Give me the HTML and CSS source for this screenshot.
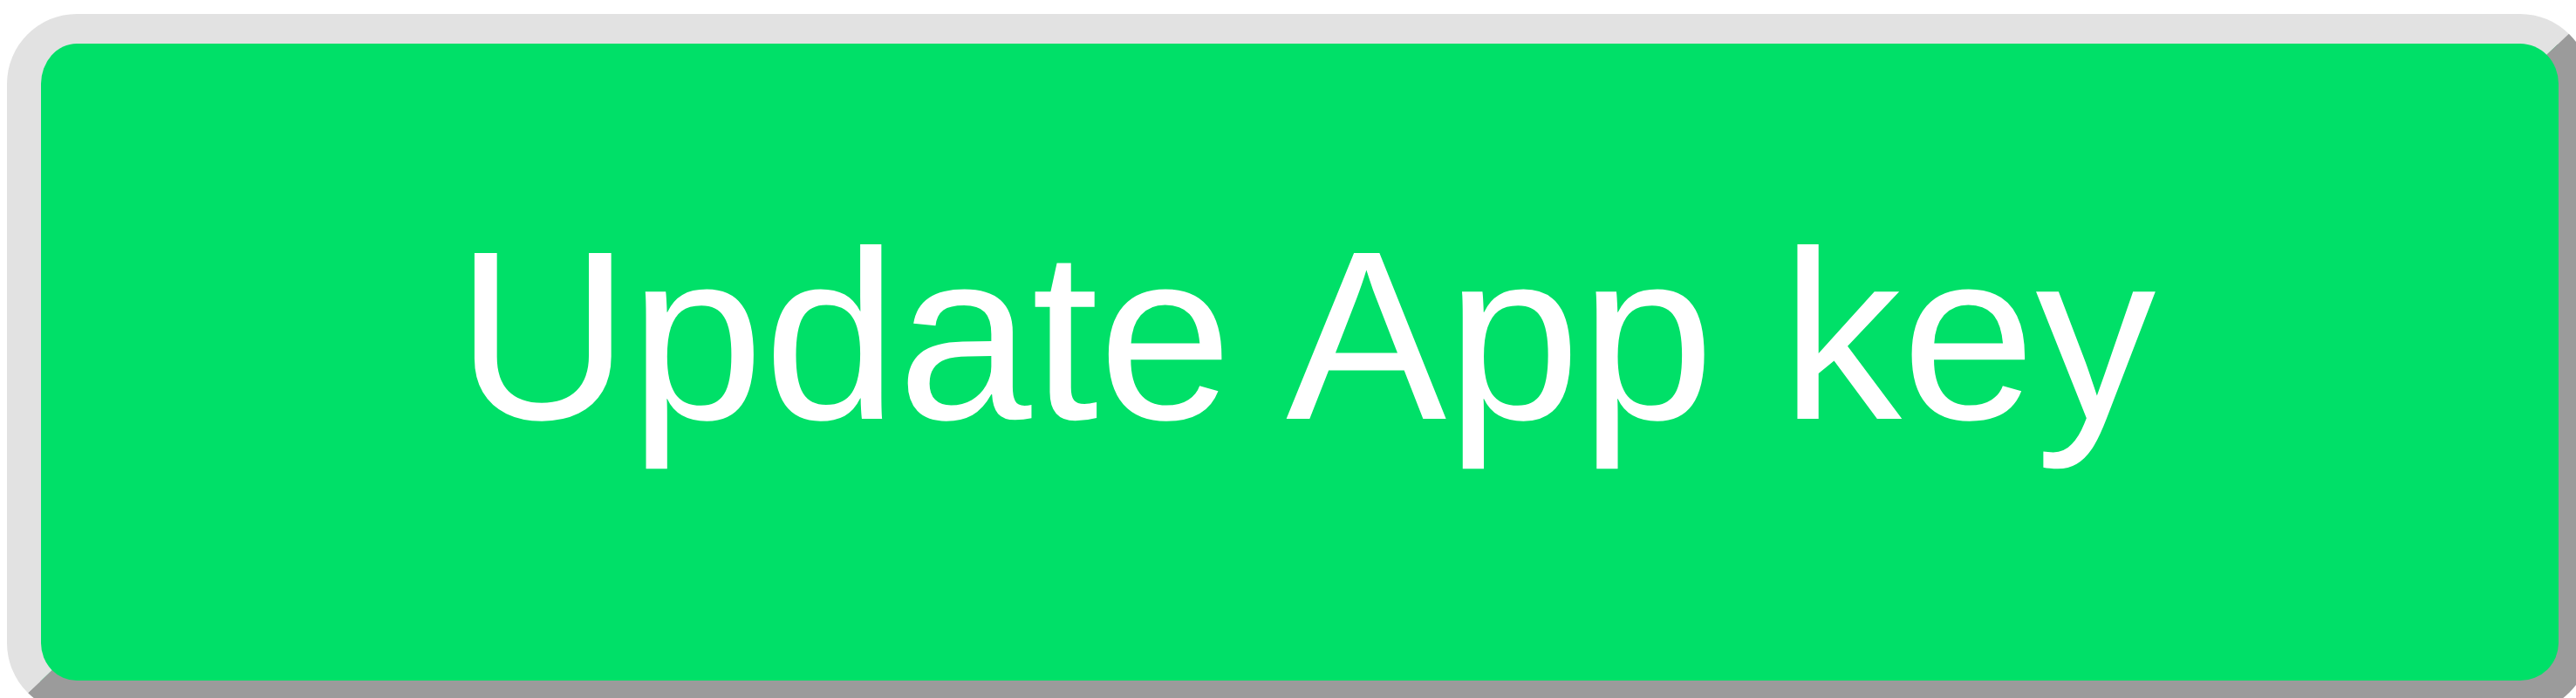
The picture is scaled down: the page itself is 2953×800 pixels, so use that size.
FILE: index.html
```html
<!DOCTYPE html>
<html>
<head>
<meta charset="utf-8">
<link rel="stylesheet" href="styles.css">
</head>
<body>
<div class="page">
  <button class="update-btn" type="button">Update App key</button>
</div>
</body>
</html>
```
FILE: styles.css
```css
html, body {
  margin: 0;
  padding: 0;
  background: #ffffff;
  overflow: hidden;
}
.page {
  padding: 16px 0 0 8px;
  width: 2953px;
  height: 800px;
  box-sizing: border-box;
  overflow: hidden;
}
.update-btn {
  display: block;
  box-sizing: border-box;
  width: 2961px;
  height: 801px;
  margin: 0;
  padding: 0 0 62px 14px;
  text-align: center;
  background: #00e068;
  color: #ffffff;
  font-family: "Liberation Sans", Arial, Helvetica, sans-serif;
  font-size: 276px;
  line-height: 276px;
  font-weight: 400;
  white-space: nowrap;
  border-style: solid;
  border-width: 34px 36px 37px 39px;
  border-color: #e2e2e2 #9b9b9b #9b9b9b #e2e2e2;
  border-radius: 80px;
  cursor: pointer;
}
```
